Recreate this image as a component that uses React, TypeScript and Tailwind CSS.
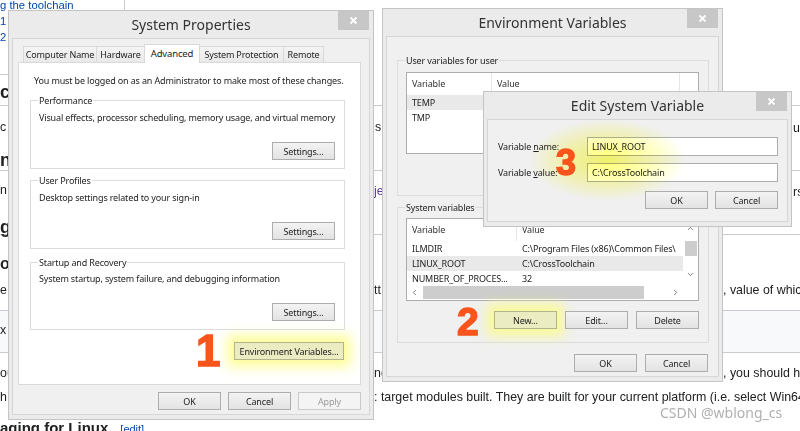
import React from "react";
import { ChevronUp, ChevronDown, ChevronLeft, ChevronRight } from "lucide-react";

type Kids = { children?: React.ReactNode };

function CloseX() {
  return (
    <div className="absolute right-[4px] top-0 flex h-[19px] w-[31px] items-center justify-center bg-[#c7c7c7]">
      <svg width="9" height="9" viewBox="0 0 9 9">
        <path d="M1.5 1.5L7.5 7.5M7.5 1.5L1.5 7.5" stroke="#fff" strokeWidth="1.8" />
      </svg>
    </div>
  );
}

function Win({ title, className = "", children }: Kids & { title: string; className?: string }) {
  return (
    <div className={`absolute flex flex-col border border-[#c4c4c4] bg-[#ebebeb] font-['Noto_Sans',sans-serif] ${className}`}>
      <div className="relative flex h-[27px] shrink-0 items-center justify-center">
        <span className="text-[14px] leading-none text-[#333]">{title}</span>
        <CloseX />
      </div>
      <div className="mx-[3px] mb-[4px] flex flex-1 flex-col border border-[#d6d6d6] bg-[#f0f0f0] tracking-[-0.15px] whitespace-nowrap">
        {children}
      </div>
    </div>
  );
}

function Btn({ children, w = "w-[63px]", glow = false, disabled = false }: Kids & { w?: string; glow?: boolean; disabled?: boolean }) {
  const look = disabled
    ? "border-[#cacaca] bg-[#f4f4f4] text-[#9a9a9a]"
    : glow
    ? "border-[#b3b38c] bg-[#ebecc2] text-[#222] shadow-[0_0_12px_7px_rgba(252,252,130,0.8)]"
    : "border-[#adadad] bg-gradient-to-b from-[#f3f3f3] to-[#e3e3e3] text-[#222]";
  return (
    <div className={`flex h-[18px] ${w} shrink-0 items-center justify-center border text-[9px] leading-none ${look}`}>
      {children}
    </div>
  );
}

function Group({ label, className = "", labelBg = "bg-white", children }: Kids & { label: string; className?: string; labelBg?: string }) {
  return (
    <div className={`relative flex flex-col border border-[#dcdcdc] ${className}`}>
      <span className={`absolute -top-[7px] left-[7px] px-[1px] leading-[14px] ${labelBg}`}>{label}</span>
      {children}
    </div>
  );
}

function Tab({ w, active = false, noLeft = false, last = false, children }: Kids & { w: string; active?: boolean; noLeft?: boolean; last?: boolean }) {
  if (active) {
    return (
      <div className={`relative z-10 -mb-px flex h-[19px] ${w} items-center justify-center border-x border-t border-[#d9d9d9] bg-white pb-[1px] text-[9.5px]`}>
        {children}
      </div>
    );
  }
  return (
    <div
      className={`flex h-[16px] ${w} items-center justify-center border-t border-[#d9d9d9] bg-gradient-to-b from-[#f4f4f4] to-[#e9e9e9] text-[9px] ${noLeft ? "" : "border-l"} ${last ? "border-r" : ""}`}
    >
      {children}
    </div>
  );
}

function SystemProperties() {
  return (
    <Win title="System Properties" className="left-[8px] top-[10px] h-[410px] w-[366px]">
      <div className="flex flex-col pl-[5px] pr-[8px] pt-[5px] text-[9px] leading-[14px] text-[#222]">
        <div className="flex h-[18px] items-end pl-[5px]">
          <Tab w="w-[73px]">Computer Name</Tab>
          <Tab w="w-[48px]">Hardware</Tab>
          <Tab w="w-[56px]" active>
            Advanced
          </Tab>
          <Tab w="w-[83px]" noLeft>
            System Protection
          </Tab>
          <Tab w="w-[41px]" last>
            Remote
          </Tab>
        </div>
        <div className="flex h-[323px] flex-col border border-[#d9d9d9] bg-white pl-[11px] pr-[15px]">
          <p className="ml-[4px] mt-[11px]">You must be logged on as an Administrator to make most of these changes.</p>
          <Group label="Performance" className="mt-[12px] h-[69px]">
            <p className="pl-[8px] pt-[10px]">Visual effects, processor scheduling, memory usage, and virtual memory</p>
            <div className="mb-[8px] mr-[9px] mt-auto flex justify-end">
              <Btn>Settings...</Btn>
            </div>
          </Group>
          <Group label="User Profiles" className="mt-[11px] h-[69px]">
            <p className="pl-[8px] pt-[10px]">Desktop settings related to your sign-in</p>
            <div className="mb-[8px] mr-[9px] mt-auto flex justify-end">
              <Btn>Settings...</Btn>
            </div>
          </Group>
          <Group label="Startup and Recovery" className="mt-[13px] h-[68px]">
            <p className="pl-[8px] pt-[9px]">System startup, system failure, and debugging information</p>
            <div className="mb-[8px] mr-[9px] mt-auto flex justify-end">
              <Btn>Settings...</Btn>
            </div>
          </Group>
          <div className="mr-[1px] mt-[12px] flex justify-end">
            <Btn w="w-[110px]" glow>
              Environment Variables...
            </Btn>
          </div>
        </div>
        <div className="mt-[7px] flex justify-end gap-[7px]">
          <Btn>OK</Btn>
          <Btn>Cancel</Btn>
          <Btn disabled>Apply</Btn>
        </div>
      </div>
    </Win>
  );
}

function Row({ name, value, col, selected = false }: { name: string; value: string; col: string; selected?: boolean }) {
  return (
    <div className={`flex h-[15px] shrink-0 items-center whitespace-nowrap ${selected ? "bg-[#e9e9e9]" : ""}`}>
      <span className={`${col} shrink-0 overflow-hidden pl-[5px]`}>{name}</span>
      <span className="pl-[5px]">{value}</span>
    </div>
  );
}

function Header({ col }: { col: string }) {
  return (
    <div className="flex h-[22px] shrink-0 items-center text-[#333]">
      <span className={`${col} flex h-full shrink-0 items-center border-r border-[#e5e5e5] pl-[5px]`}>Variable</span>
      <span className="flex h-full w-[188px] shrink-0 items-center border-r border-[#e5e5e5] pl-[5px]">Value</span>
    </div>
  );
}

function EnvironmentVariables() {
  return (
    <Win title="Environment Variables" className="left-[382px] top-[8px] h-[374px] w-[341px]">
      <div className="flex flex-col pl-[10px] pr-[9px] text-[9px] leading-[14px] text-[#222]">
        <Group label="User variables for user" labelBg="bg-[#f0f0f0]" className="mt-[23px] h-[136px]">
          <div className="ml-[8px] mr-[9px] mt-[11px] flex h-[82px] flex-col overflow-hidden border border-[#abadb3] bg-white">
            <Header col="w-[85px]" />
            <Row name="TEMP" value="%USERPROFILE%\AppData\Local\Temp" col="w-[85px]" selected />
            <Row name="TMP" value="%USERPROFILE%\AppData\Local\Temp" col="w-[85px]" />
          </div>
        </Group>
        <Group label="System variables" labelBg="bg-[#f0f0f0]" className="mt-[11px] h-[136px]">
          <div className="ml-[8px] mr-[9px] mt-[10px] flex h-[83px] flex-col border border-[#abadb3] bg-white">
            <div className="flex h-[66px]">
              <div className="flex flex-1 flex-col overflow-hidden">
                <Header col="w-[110px]" />
                <Row name="ILMDIR" value="C:\Program Files (x86)\Common Files\" col="w-[110px]" />
                <Row name="LINUX_ROOT" value="C:\CrossToolchain" col="w-[110px]" selected />
                <Row name="NUMBER_OF_PROCES..." value="32" col="w-[110px]" />
              </div>
              <div className="flex w-[15px] shrink-0 flex-col items-center">
                <ChevronUp size={9} strokeWidth={2.2} className="mt-[5px] text-[#606060]" />
                <div className="mt-[8px] h-[15px] w-[12px] bg-[#cdcdcd]" />
                <ChevronDown size={9} strokeWidth={2.2} className="mb-[6px] mt-auto text-[#606060]" />
              </div>
            </div>
            <div className="flex h-[15px]">
              <div className="flex flex-1 items-center">
                <div className="flex w-[15px] justify-center">
                  <ChevronLeft size={9} strokeWidth={2.2} className="text-[#606060]" />
                </div>
                <div className="ml-[1px] h-[13px] w-[221px] bg-[#cdcdcd]" />
                <div className="ml-auto flex w-[15px] justify-center">
                  <ChevronRight size={9} strokeWidth={2.2} className="text-[#606060]" />
                </div>
              </div>
              <div className="w-[15px]" />
            </div>
          </div>
          <div className="mr-[9px] mt-[10px] flex justify-end gap-[8px]">
            <Btn glow>New...</Btn>
            <Btn>Edit...</Btn>
            <Btn>Delete</Btn>
          </div>
        </Group>
        <div className="mt-[11px] flex justify-end gap-[8px] pr-[1px]">
          <Btn>OK</Btn>
          <Btn>Cancel</Btn>
        </div>
      </div>
    </Win>
  );
}

function EditVariable() {
  return (
    <Win title="Edit System Variable" className="left-[483px] top-[91px] h-[136px] w-[309px]">
      <div className="flex flex-col pl-[10px] pr-[9px] pt-[17px] text-[9px] leading-[14px] text-[#222]">
        <div className="flex items-center">
          <span className="w-[89px] shrink-0">
            Variable <span className="underline">n</span>ame:
          </span>
          <div className="flex h-[19px] flex-1 items-center border border-[#abadb3] bg-white pl-[4px]">LINUX_ROOT</div>
        </div>
        <div className="mt-[7px] flex items-center">
          <span className="w-[89px] shrink-0">
            Variable <span className="underline">v</span>alue:
          </span>
          <div className="flex h-[19px] flex-1 items-center border border-[#abadb3] bg-white pl-[4px]">C:\CrossToolchain</div>
        </div>
        <div className="mt-[9px] flex justify-end gap-[7px]">
          <Btn>OK</Btn>
          <Btn>Cancel</Btn>
        </div>
      </div>
    </Win>
  );
}

const rule = "border-b border-[#c8ccd1]";
const cols = "grid grid-cols-[374px_349px_77px]";

function WikiPage() {
  return (
    <div className="flex flex-col font-['Liberation_Sans',Arial,sans-serif] text-[12.4px] leading-[14px] text-[#202122]">
      <div className="h-[75px] w-[125px] border-b border-r border-[#c8ccd1] text-[11.3px] leading-[16px] text-[#0645ad]">
        <div className="-mt-[3px] whitespace-nowrap">g the toolchain</div>
        <div>1</div>
        <div>2</div>
      </div>
      <div className={`h-[31px] ${rule}`}>
        <div className="mt-[7px] text-[18px] font-bold leading-[20px]">c</div>
      </div>
      <div className={`${cols} h-[65px] ${rule}`}>
        <div className="flex flex-col">
          <span className="mt-[14px]">c</span>
          <span className="mt-[16px] text-[18px] font-bold leading-[20px]">n</span>
        </div>
        <span className="mt-[14px] pl-[1px]">s</span>
        <span className="mt-[15px] pl-[70px]">up</span>
      </div>
      <div className={`${cols} h-[64px] ${rule}`}>
        <div className="flex flex-col">
          <span className="mt-[12px]">n</span>
          <span className="mt-[20px] text-[18px] font-bold leading-[20px]">g</span>
        </div>
        <span className="mt-[13px] text-[#5a3696]">je</span>
        <span className="mt-[14px] pl-[70px]">rs</span>
      </div>
      <div className={`${cols} h-[76px] ${rule}`}>
        <div className="flex flex-col">
          <span className="mt-[19px] text-[16px] font-bold leading-[20px]">o</span>
          <span className="mt-[9px]">e</span>
        </div>
        <span className="mt-[48px]">tt</span>
        <span className="mt-[48px] overflow-hidden whitespace-nowrap text-[#202122]">, value of which</span>
      </div>
      <div className={`h-[42px] bg-[#f8f9fa] ${rule}`}>
        <div className="mt-[12px]">x</div>
      </div>
      <div className={`${cols} h-[33px]`}>
        <span className="mt-[13px]">ou</span>
        <span className="mt-[13px]">ng</span>
        <span className="mt-[13px] overflow-hidden whitespace-nowrap text-[#202122]">, you should have</span>
      </div>
      <div className={`${cols} h-[25px]`}>
        <span className="mt-[4px]">h</span>
        <span className="col-span-2 mt-[4px] overflow-hidden whitespace-nowrap">: target modules built. They are built for your current platform (i.e. select Win64</span>
      </div>
      <div className="mt-[8px] flex items-baseline whitespace-nowrap">
        <span className="text-[15px] font-bold leading-[18px]">aging for Linux</span>
        <span className="ml-[12px] text-[11px] text-[#0645ad]">[edit]</span>
      </div>
    </div>
  );
}

const num = "absolute font-['Liberation_Sans',Arial,sans-serif] font-bold leading-none text-[#f9541c] [-webkit-text-stroke:1.5px_#f9541c]";

export default function App() {
  return (
    <div className="relative h-[431px] w-[800px] overflow-hidden bg-white">
      <WikiPage />
      <SystemProperties />
      <EnvironmentVariables />
      <EditVariable />
      <div className="pointer-events-none absolute left-[530px] top-[120px] h-[80px] w-[155px] mix-blend-multiply [background:radial-gradient(ellipse_at_center,rgba(255,255,90,0.85)_0%,rgba(255,255,110,0.4)_45%,rgba(255,255,110,0)_72%)]" />
      <span className={`${num} left-[196px] top-[329px] text-[44px]`}>1</span>
      <span className={`${num} left-[457px] top-[302px] text-[39px]`}>2</span>
      <span className={`${num} left-[556px] top-[145px] text-[36px]`}>3</span>
      <span className="absolute left-[660px] top-[404px] font-['Noto_Sans',sans-serif] text-[14px] leading-[18px] text-[#b0b0b0]">
        CSDN @wblong_cs
      </span>
    </div>
  );
}
